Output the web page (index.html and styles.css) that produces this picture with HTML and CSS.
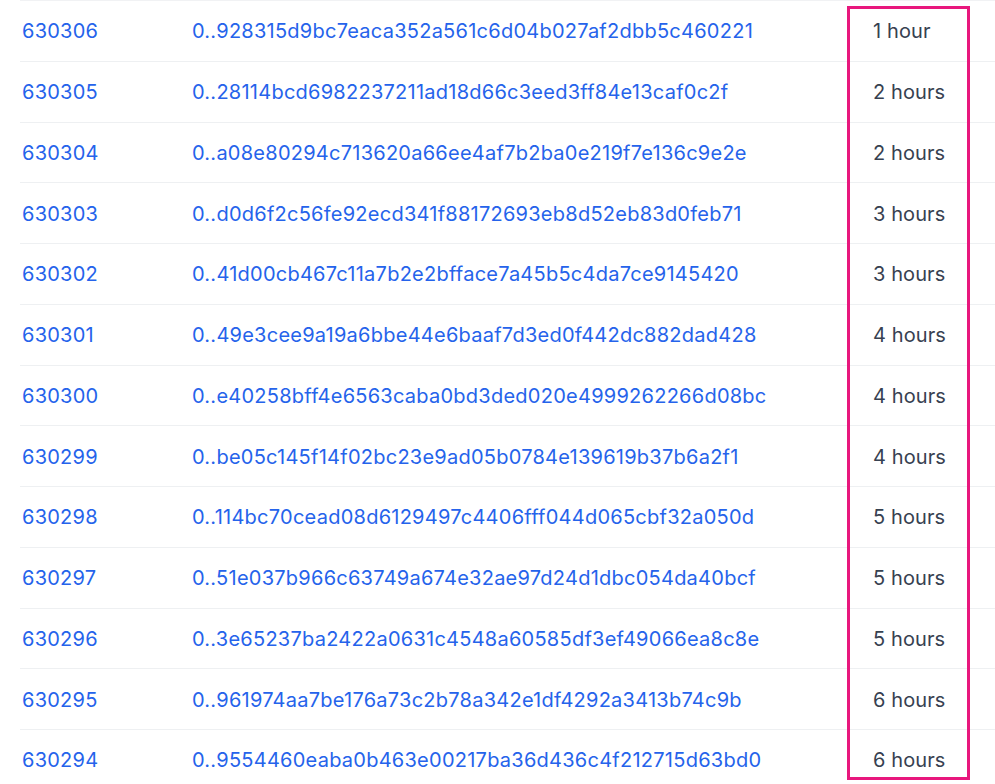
FILE: index.html
```html
<!DOCTYPE html>
<html lang="en">
<head>
    <meta charset="UTF-8">
    <title>Blocks</title>
    <link rel="stylesheet" href="styles.css">
</head>
<body>
    <div class="container">
        <table class="blocks">
            <tbody>
                <tr><td class="num"><a href="#">630306</a></td><td class="hash"><a href="#">0..928315d9bc7eaca352a561c6d04b027af2dbb5c460221</a></td><td class="age">1 hour</td></tr>
                <tr><td class="num"><a href="#">630305</a></td><td class="hash"><a href="#">0..28114bcd6982237211ad18d66c3eed3ff84e13caf0c2f</a></td><td class="age">2 hours</td></tr>
                <tr><td class="num"><a href="#">630304</a></td><td class="hash"><a href="#">0..a08e80294c713620a66ee4af7b2ba0e219f7e136c9e2e</a></td><td class="age">2 hours</td></tr>
                <tr><td class="num"><a href="#">630303</a></td><td class="hash"><a href="#">0..d0d6f2c56fe92ecd341f88172693eb8d52eb83d0feb71</a></td><td class="age">3 hours</td></tr>
                <tr><td class="num"><a href="#">630302</a></td><td class="hash"><a href="#">0..41d00cb467c11a7b2e2bfface7a45b5c4da7ce9145420</a></td><td class="age">3 hours</td></tr>
                <tr><td class="num"><a href="#">630301</a></td><td class="hash"><a href="#">0..49e3cee9a19a6bbe44e6baaf7d3ed0f442dc882dad428</a></td><td class="age">4 hours</td></tr>
                <tr><td class="num"><a href="#">630300</a></td><td class="hash"><a href="#">0..e40258bff4e6563caba0bd3ded020e4999262266d08bc</a></td><td class="age">4 hours</td></tr>
                <tr><td class="num"><a href="#">630299</a></td><td class="hash"><a href="#">0..be05c145f14f02bc23e9ad05b0784e139619b37b6a2f1</a></td><td class="age">4 hours</td></tr>
                <tr><td class="num"><a href="#">630298</a></td><td class="hash"><a href="#">0..114bc70cead08d6129497c4406fff044d065cbf32a050d</a></td><td class="age">5 hours</td></tr>
                <tr><td class="num"><a href="#">630297</a></td><td class="hash"><a href="#">0..51e037b966c63749a674e32ae97d24d1dbc054da40bcf</a></td><td class="age">5 hours</td></tr>
                <tr><td class="num"><a href="#">630296</a></td><td class="hash"><a href="#">0..3e65237ba2422a0631c4548a60585df3ef49066ea8c8e</a></td><td class="age">5 hours</td></tr>
                <tr><td class="num"><a href="#">630295</a></td><td class="hash"><a href="#">0..961974aa7be176a73c2b78a342e1df4292a3413b74c9b</a></td><td class="age">6 hours</td></tr>
                <tr><td class="num"><a href="#">630294</a></td><td class="hash"><a href="#">0..9554460eaba0b463e00217ba36d436c4f212715d63bd0</a></td><td class="age">6 hours</td></tr>
            </tbody>
        </table>
        <div class="highlight"></div>
    </div>
</body>
</html>
```

FILE: styles.css
```css
body {
    margin: 0;
    background: #ffffff;
    font-family: 'Inter', 'Liberation Sans', sans-serif;
    overflow: hidden;
}
.container {
    position: relative;
    padding-left: 20px;
}
.blocks {
    width: 975px;
    border-collapse: collapse;
    border-top: 1px solid #f1f2f4;
    font-size: 20px;
}
.blocks tr {
    height: 60.75px;
    border-bottom: 1px solid #eef0f2;
}
.blocks td {
    padding: 1px 0 0 0;
    white-space: nowrap;
}
.blocks a {
    color: #2563eb;
    text-decoration: none;
    letter-spacing: 0.25px;
}
.num {
    width: 170px;
    padding-left: 2px !important;
}
.hash {
    width: 655px;
}
.age {
    padding-left: 26px !important;
    color: #374151;
    letter-spacing: 0.1px;
}
.highlight {
    position: absolute;
    left: 847px;
    top: 6px;
    width: 117px;
    height: 768px;
    border: 3px solid #e8177d;
}
```
